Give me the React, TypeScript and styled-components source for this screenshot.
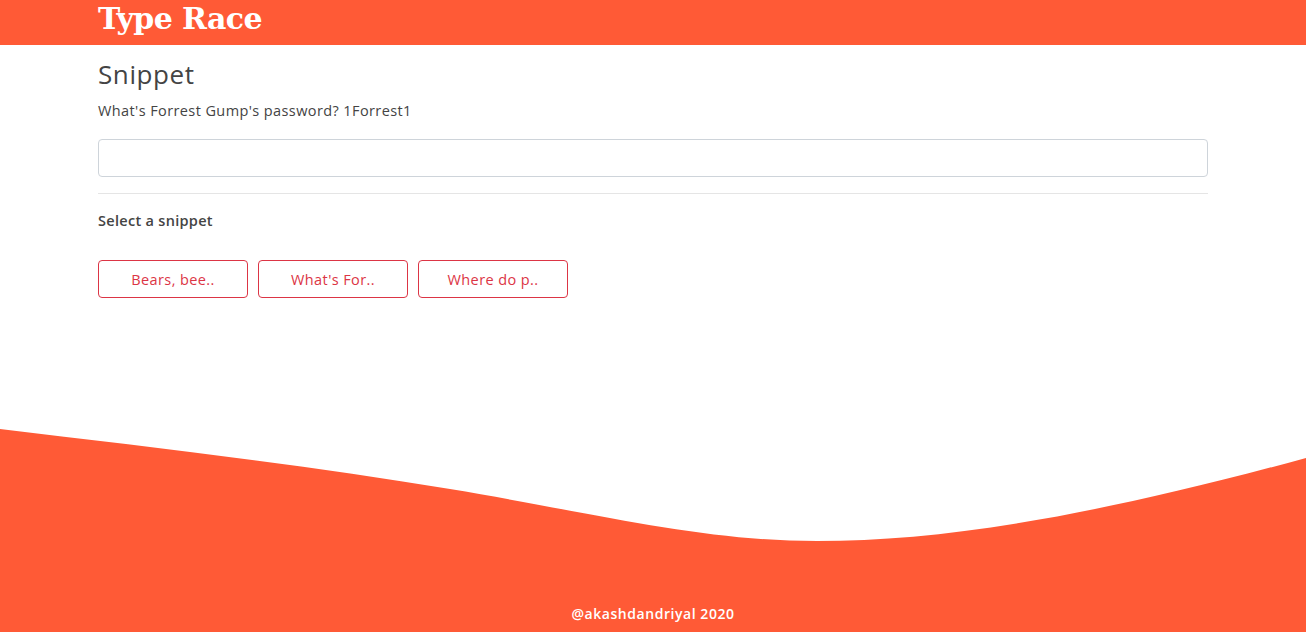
import React from "react";
import styled, { createGlobalStyle } from "styled-components";

const Global = createGlobalStyle`
  html, body { margin: 0; padding: 0; }
  body {
    font-family: "Open Sans", Lato, sans-serif;
    color: #444;
    background: #fff;
    letter-spacing: 0.4px;
  }
  * { box-sizing: border-box; }
`;

const Page = styled.div`
  min-height: 632px;
  display: flex;
  flex-direction: column;
`;

const Header = styled.header`
  background: #ff5a36;
  height: 45px;
`;

const Container = styled.div`
  width: 1140px;
  margin: 0 auto;
  padding: 0 15px;
`;

const Brand = styled.h1`
  margin: 0;
  font-family: "DejaVu Serif", "Liberation Serif", serif;
  font-weight: 700;
  font-size: 30px;
  line-height: 38px;
  color: #fff;
  letter-spacing: -0.6px;
`;

const Main = styled.main`
  flex: 1;
  padding-top: 12px;
`;

const Title = styled.h3`
  margin: 0;
  font-weight: 400;
  font-size: 26px;
  line-height: 34px;
  letter-spacing: 0.6px;
  color: #444;
`;

const Quote = styled.p`
  margin: 9px 0 0;
  font-size: 14.5px;
  line-height: 22px;
  color: #444;
`;

const Input = styled.input`
  display: block;
  width: 100%;
  height: 38px;
  margin-top: 17px;
  border: 1px solid #ced4da;
  border-radius: 4px;
  padding: 6px 12px;
  font: inherit;
  outline: none;
`;

const Rule = styled.hr`
  margin: 16px 0 0;
  border: 0;
  border-top: 1px solid rgba(0, 0, 0, 0.1);
`;

const Label = styled.h6`
  margin: 16px 0 0;
  font-size: 14.5px;
  font-weight: 600;
  line-height: 22px;
  letter-spacing: 0.3px;
  color: #444;
`;

const ButtonRow = styled.div`
  display: flex;
  gap: 10px;
  margin-top: 28px;
`;

const SnippetButton = styled.button`
  width: 150px;
  height: 38px;
  background: #fff;
  border: 1px solid #dc3545;
  border-radius: 4px;
  color: #dc3545;
  font-family: inherit;
  font-size: 14.5px;
  letter-spacing: 0.4px;
  cursor: pointer;
`;

const Footer = styled.footer`
  position: relative;
  height: 203px;
  display: flex;
  align-items: flex-end;
  justify-content: center;
`;

const Wave = styled.svg`
  position: absolute;
  inset: 0;
  width: 100%;
  height: 100%;
  display: block;
`;

const FooterText = styled.span`
  position: relative;
  color: #fff;
  font-size: 14px;
  font-weight: 600;
  line-height: 18px;
  letter-spacing: 0.55px;
  margin-bottom: 9px;
`;

export default function App() {
  return (
    <Page>
      <Global />
      <Header>
        <Container>
          <Brand>Type Race</Brand>
        </Container>
      </Header>
      <Main>
        <Container>
          <Title>Snippet</Title>
          <Quote>What's Forrest Gump's password? 1Forrest1</Quote>
          <Input />
          <Rule />
          <Label>Select a snippet</Label>
          <ButtonRow>
            <SnippetButton>Bears, bee..</SnippetButton>
            <SnippetButton>What's For..</SnippetButton>
            <SnippetButton>Where do p..</SnippetButton>
          </ButtonRow>
        </Container>
      </Main>
      <Footer>
        <Wave viewBox="0 0 1306 203" preserveAspectRatio="none">
          <path
            d="M0 0 C150 18 300 35 450 60 C600 85 700 112 817 112 C950 112 1100 85 1306 29 L1306 203 L0 203 Z"
            fill="#ff5a36"
          />
        </Wave>
        <FooterText>@akashdandriyal 2020</FooterText>
      </Footer>
    </Page>
  );
}
